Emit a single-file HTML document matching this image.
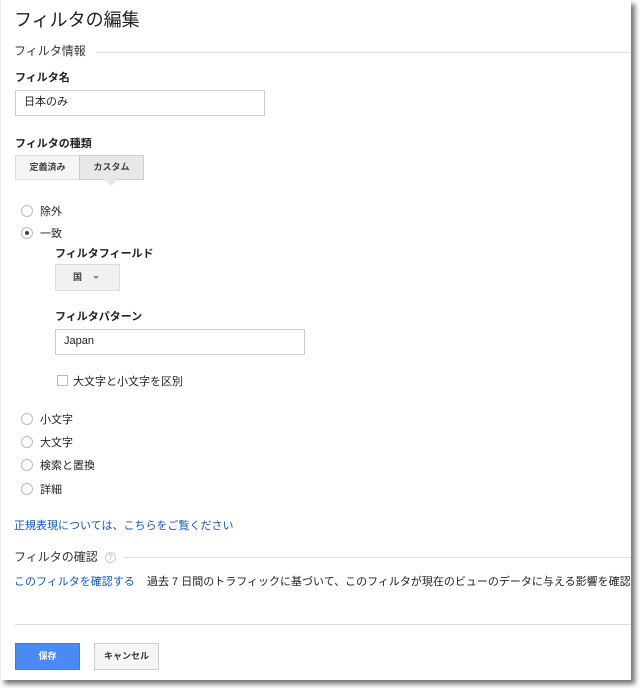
<!DOCTYPE html>
<html><head><meta charset="utf-8"><style>
*{margin:0;padding:0;box-sizing:border-box}
body{width:640px;height:688px;background:#fff;font-family:"Liberation Sans","Noto Sans CJK JP",sans-serif;color:#222;position:relative;overflow:hidden}
.panel{position:absolute;left:0;top:0;width:631px;height:680px;background:#fff;box-shadow:4px 4px 5px rgba(0,0,0,.55);border-left:1px solid #eee;overflow:hidden}
.a{position:absolute;white-space:nowrap}
.b{font-weight:bold;font-size:11px}
.t{font-size:11px}
.inp{position:absolute;border:1px solid #ccc;background:#fff;font-size:11px;padding-left:8px;line-height:23px}
.rad{position:absolute;width:12px;height:12px;border:1px solid #bbb;border-radius:50%;background:#fff}
.line{position:absolute;height:1px;background:#ddd}
.blue{color:#15c}
</style></head><body>
<div class="panel">
<div class="a" style="left:13px;top:6px;font-size:18px;color:#222">フィルタの編集</div>
<div class="a" style="left:13px;top:42px;font-size:12px;color:#333">フィルタ情報</div>
<div class="line" style="left:95px;top:52px;width:536px"></div>
<div class="a b" style="left:14px;top:69px">フィルタ名</div>
<div class="inp" style="left:14px;top:90px;width:250px;height:26px">日本のみ</div>
<div class="a b" style="left:14px;top:135px">フィルタの種類</div>
<div class="a" style="left:14px;top:155px;width:65px;height:25px;background:#f5f5f5;border:1px solid #ddd;font-size:9px;font-weight:bold;text-align:center;line-height:23px;color:#444">定義済み</div>
<div class="a" style="left:78px;top:155px;width:65px;height:25px;background:#e8e8e8;border:1px solid #ccc;font-size:9px;font-weight:bold;text-align:center;line-height:23px;color:#444">カスタム</div>
<div class="a" style="left:103px;top:179px;width:0;height:0;border-left:7px solid transparent;border-right:7px solid transparent;border-top:7px solid #e8e8e8"></div>
<div class="rad" style="left:20px;top:205px"></div><div class="a t" style="left:39px;top:203px">除外</div>
<div class="rad" style="left:20px;top:227px"></div><div class="a" style="left:24px;top:231px;width:4px;height:4px;border-radius:50%;background:#444"></div><div class="a t" style="left:39px;top:225px">一致</div>
<div class="a b" style="left:54px;top:245px">フィルタフィールド</div>
<div class="a" style="left:54px;top:264px;width:65px;height:27px;background:#f1f1f1;border:1px solid #ddd;font-size:9px;font-weight:bold;color:#444;line-height:25px;padding-left:17px">国 <span style="display:inline-block;margin-left:8px;width:0;height:0;border-left:3px solid transparent;border-right:3px solid transparent;border-top:3px solid #888;vertical-align:middle"></span></div>
<div class="a b" style="left:54px;top:308px">フィルタパターン</div>
<div class="inp" style="left:54px;top:329px;width:250px;height:26px">Japan</div>
<div class="a" style="left:56px;top:375px;width:11px;height:11px;border:1px solid #bbb"></div>
<div class="a t" style="left:72px;top:373px">大文字と小文字を区別</div>
<div class="rad" style="left:20px;top:413px"></div><div class="a t" style="left:39px;top:411px">小文字</div>
<div class="rad" style="left:20px;top:436px"></div><div class="a t" style="left:39px;top:434px">大文字</div>
<div class="rad" style="left:20px;top:459px"></div><div class="a t" style="left:39px;top:457px">検索と置換</div>
<div class="rad" style="left:20px;top:483px"></div><div class="a t" style="left:39px;top:481px">詳細</div>
<div class="a t blue" style="left:13px;top:517px">正規表現については、こちらをご覧ください</div>
<div class="a" style="left:13px;top:548px;font-size:12px;color:#333">フィルタの確認</div>
<div class="a" style="left:104px;top:552px;width:11px;height:11px;border:1px solid #ccc;border-radius:50%;font-size:8px;color:#aaa;text-align:center;line-height:9px">?</div>
<div class="line" style="left:123px;top:557px;width:508px"></div>
<div class="a t blue" style="left:13px;top:573px">このフィルタを確認する</div>
<div class="a t" style="left:146px;top:573px">過去 7 日間のトラフィックに基づいて、このフィルタが現在のビューのデータに与える影響を確認します</div>
<div class="line" style="left:14px;top:624px;width:616px"></div>
<div class="a" style="left:14px;top:643px;width:65px;height:27px;background:#4a8af4;border:1px solid #3b7be0;color:#fff;font-size:9px;font-weight:bold;text-align:center;line-height:25px">保存</div>
<div class="a" style="left:93px;top:643px;width:65px;height:27px;background:#f5f5f5;border:1px solid #ccc;color:#333;font-size:9px;font-weight:bold;text-align:center;line-height:25px">キャンセル</div>
</div>
</body></html>
